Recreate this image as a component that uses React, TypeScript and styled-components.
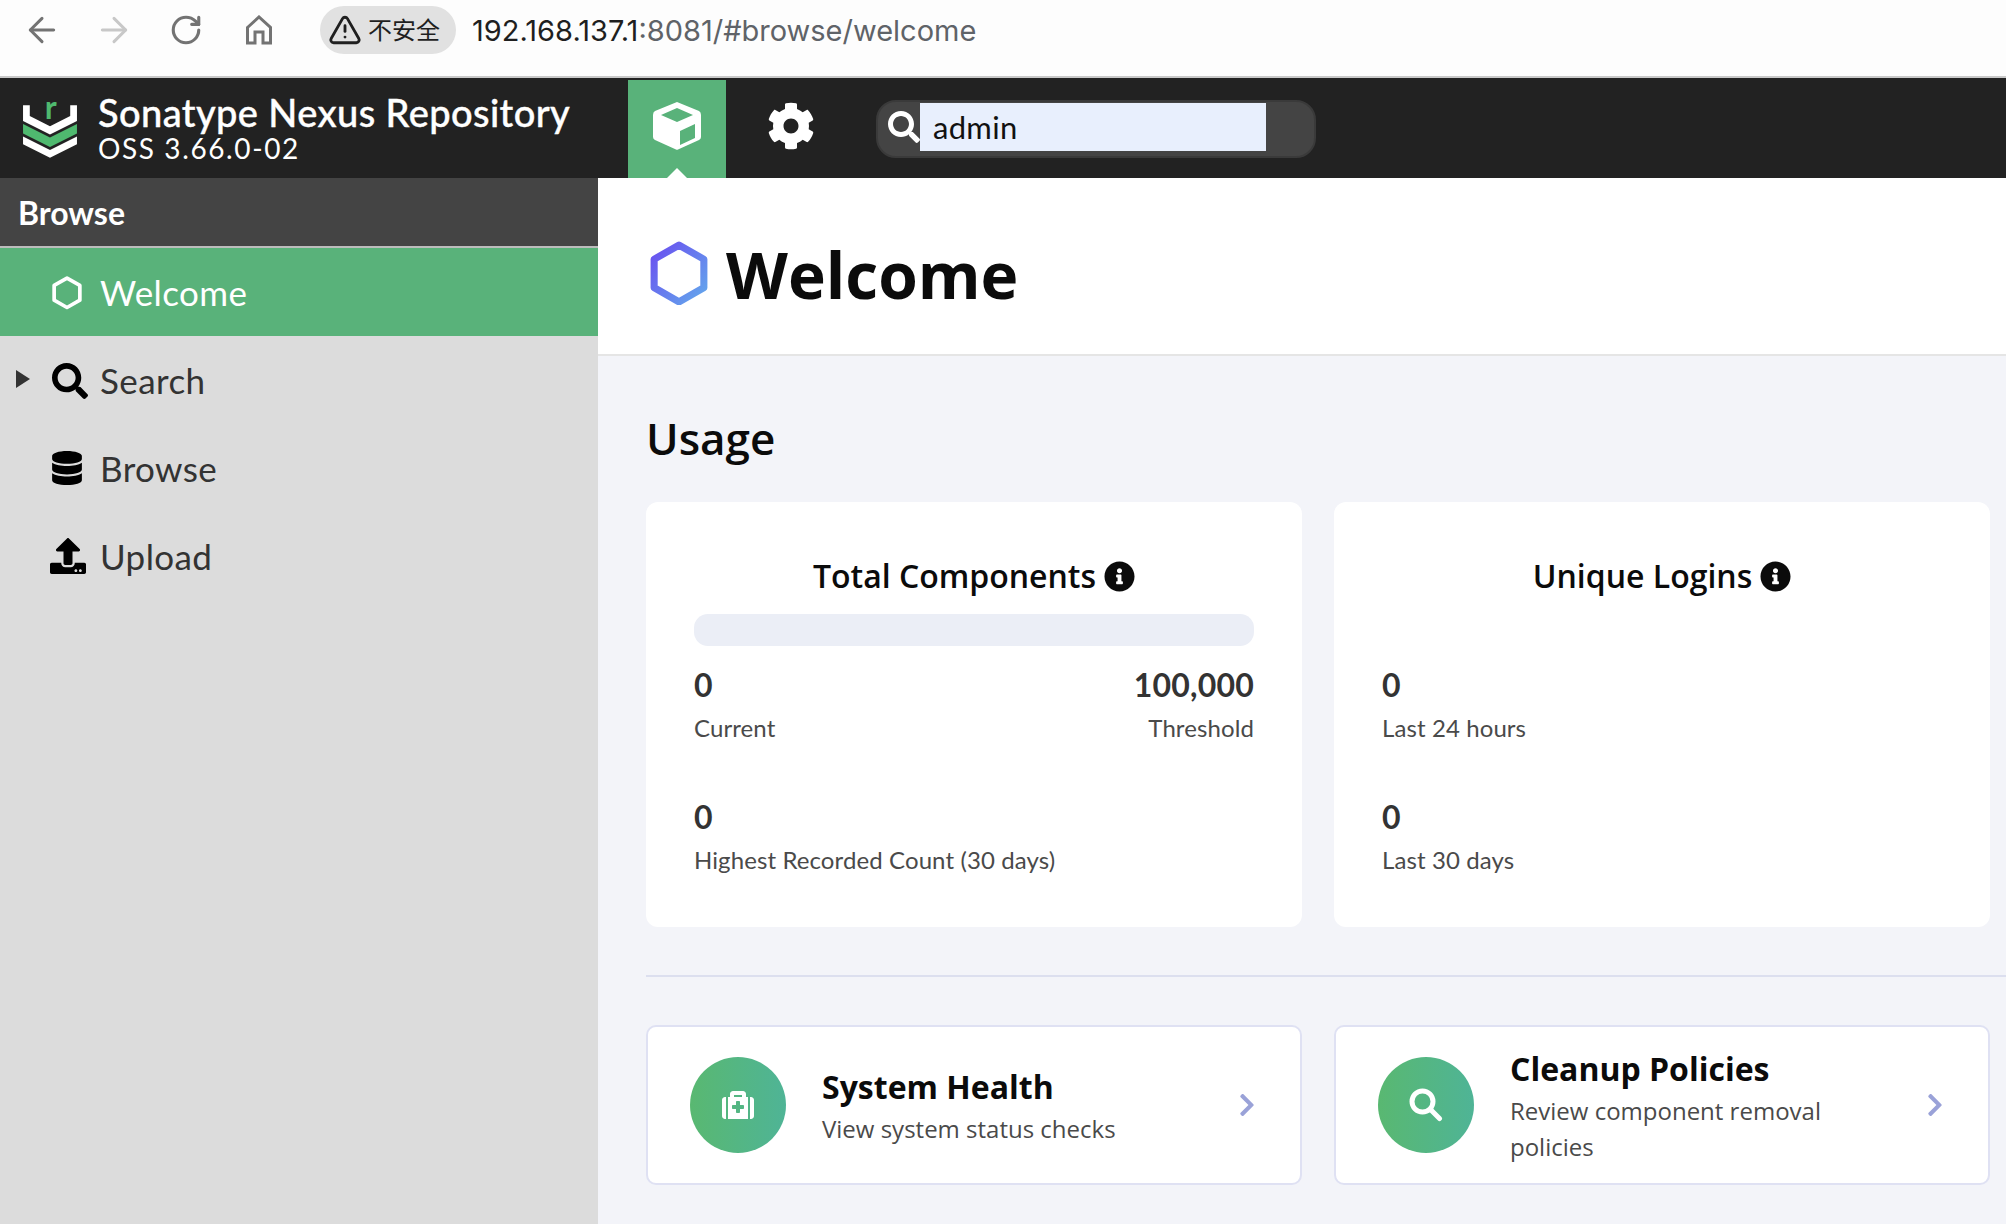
import styled, { createGlobalStyle } from "styled-components";
import { ArrowLeft, ArrowRight, RotateCw, TriangleAlert } from "lucide-react";
import { FaSearch, FaDatabase, FaCog, FaInfoCircle, FaUpload, FaMedkit, FaChevronRight } from "react-icons/fa";
import type { ReactNode } from "react";

const Global = createGlobalStyle`
  html, body { margin: 0; padding: 0; background: #f3f4f9; }
  body { font-family: "Lato", "Liberation Sans", sans-serif; }
  * { box-sizing: border-box; }
`;

const Page = styled.div`
  width: 2006px;
  height: 1224px;
  display: flex;
  flex-direction: column;
  overflow: hidden;
`;

// fake browser chrome
const BrowserBar = styled.div`
  height: 78px;
  flex: none;
  display: flex;
  align-items: center;
  padding-bottom: 16px;
  background: #fdfdfd;
  border-bottom: 2px solid #c9c9c9;
`;
const NavSlot = styled.div<{ $w: number; $dim?: boolean }>`
  width: ${(p) => p.$w}px;
  flex: none;
  display: flex;
  justify-content: center;
  color: ${(p) => (p.$dim ? "#c8c8c8" : "#737373")};
`;
const Pill = styled.div`
  flex: none;
  width: 136px;
  height: 48px;
  margin-left: 32px;
  padding-left: 8px;
  display: flex;
  align-items: center;
  gap: 6px;
  border-radius: 24px;
  background: #e1e1e1;
  color: #1f1f1f;
  font: 400 24px "Noto Sans CJK SC", sans-serif;
`;
const PillText = styled.span`
  margin-top: -4px;
`;
const Url = styled.div`
  margin-left: 16px;
  font: 400 29px "Inter", "Liberation Sans", sans-serif;
  color: #5f6368;
  b {
    font-weight: 400;
    color: #1f1f1f;
  }
`;

const TopBar = styled.header`
  height: 100px;
  flex: none;
  display: flex;
  background: #222222;
`;
const Brand = styled.div`
  width: 628px;
  flex: none;
  display: flex;
  align-items: center;
  padding-left: 23px;
  color: #fff;
`;
const BrandText = styled.div`
  margin-left: 21px;
  margin-bottom: 3px;
`;
const BrandName = styled.div`
  font-size: 38px;
  font-weight: 500;
  line-height: 42px;
  letter-spacing: 0.4px;
  -webkit-text-stroke: 0.4px #fff;
`;
const BrandVersion = styled.div`
  font-size: 28px;
  line-height: 30px;
  letter-spacing: 1.6px;
  font-weight: 400;
`;
const Tab = styled.div<{ $active?: boolean }>`
  position: relative;
  width: 98px;
  margin-top: 2px;
  flex: none;
  display: flex;
  align-items: center;
  justify-content: center;
  padding-bottom: 6px;
  background: ${(p) => (p.$active ? "#59b27a" : "transparent")};
  color: #fff;
  &::after {
    content: ${(p) => (p.$active ? '""' : "none")};
    position: absolute;
    bottom: 0;
    left: 39px;
    border-left: 10px solid transparent;
    border-right: 10px solid transparent;
    border-bottom: 10px solid #fff;
  }
`;
const GearTab = styled(Tab)`
  margin-left: 16px;
`;
const SearchBox = styled.div`
  width: 440px;
  height: 58px;
  margin: 22px 0 0 36px;
  padding: 1px 48px 5px 10px;
  flex: none;
  display: flex;
  align-items: center;
  background: #444444;
  border: 2px solid #3a3a3a;
  border-radius: 20px;
  color: #fff;
`;
const SearchIcon = styled.div`
  width: 32px;
  flex: none;
  display: flex;
`;
const SearchValue = styled.div`
  flex: 1;
  height: 48px;
  padding-left: 13px;
  font-size: 31px;
  line-height: 48px;
  letter-spacing: 0.3px;
  color: #111;
  background: #e8effd;
`;

const Body = styled.div`
  flex: 1;
  display: flex;
  min-height: 0;
`;
const Sidebar = styled.aside`
  width: 598px;
  flex: none;
  background: #dcdcdc;
`;
const SideTitle = styled.div`
  height: 70px;
  padding-left: 18px;
  display: flex;
  align-items: center;
  font-size: 32px;
  font-weight: 700;
  color: #fff;
  background: #444444;
  border-bottom: 2px solid #bcbcbc;
`;
const SideRow = styled.div<{ $active?: boolean }>`
  position: relative;
  height: 88px;
  display: flex;
  align-items: center;
  padding-left: 50px;
  font-size: 35px;
  letter-spacing: 0.4px;
  color: ${(p) => (p.$active ? "#fff" : "#333333")};
  background: ${(p) => (p.$active ? "#59b27a" : "transparent")};
`;
const SideIcon = styled.div<{ $nudge?: number }>`
  width: 50px;
  flex: none;
  display: flex;
  padding-left: ${(p) => p.$nudge ?? 0}px;
  padding-top: ${(p) => (p.$nudge ? p.$nudge : 0)}px;
  color: #000;
`;
const Caret = styled.span`
  position: absolute;
  left: 16px;
  top: 34px;
  border-top: 9px solid transparent;
  border-bottom: 9px solid transparent;
  border-left: 14px solid #333;
`;

const Main = styled.main`
  flex: 1;
  min-width: 0;
  background: #f3f4f9;
`;
const PageHead = styled.div`
  height: 178px;
  padding: 14px 0 0 52px;
  display: flex;
  align-items: center;
  gap: 18px;
  background: #fff;
  border-bottom: 2px solid #e5e5e5;
`;
const PageTitle = styled.h1`
  margin: 0;
  padding-top: 4px;
  font: 700 64px/90px "Open Sans", sans-serif;
  color: #0b0b0b;
`;
const Content = styled.div`
  padding: 53px 16px 0 48px;
`;
const Heading = styled.h2`
  margin: 0 0 33px;
  height: 60px;
  font: 600 44px/58px "Open Sans", sans-serif;
  color: #0b0b0b;
`;
const Grid = styled.div`
  display: grid;
  grid-template-columns: 656px 656px;
  gap: 32px;
`;
const Card = styled.section`
  height: 425px;
  padding: 51px 48px 0;
  border-radius: 12px;
  background: #fff;
`;
const CardTitle = styled.div`
  height: 46px;
  display: flex;
  justify-content: center;
  align-items: center;
  gap: 8px;
  font: 600 32px/46px "Open Sans", sans-serif;
  color: #0b0b0b;
`;
const Meter = styled.div<{ $empty?: boolean }>`
  height: 32px;
  margin: 15px 0 16px;
  border-radius: 14px;
  background: ${(p) => (p.$empty ? "transparent" : "#ebeef6")};
`;
const StatRow = styled.div`
  height: 132px;
  display: flex;
  justify-content: space-between;
`;
const Stat = styled.div<{ $right?: boolean }>`
  text-align: ${(p) => (p.$right ? "right" : "left")};
`;
const StatValue = styled.div`
  font-size: 32px;
  font-weight: 700;
  line-height: 46px;
  letter-spacing: 0.2px;
  color: #333;
`;
const StatLabel = styled.div`
  font-size: 24px;
  line-height: 40px;
  letter-spacing: 0.1px;
  color: #4a4a4a;
`;
const Divider = styled.hr`
  height: 2px;
  margin: 48px -16px 48px 0;
  border: 0;
  background: #dcdfef;
`;
const Action = styled.div`
  height: 160px;
  padding: 0 40px 0 42px;
  display: flex;
  align-items: center;
  border: 2px solid #dfe1f3;
  border-radius: 10px;
  background: #fff;
`;
const Circle = styled.div`
  width: 96px;
  height: 96px;
  flex: none;
  display: flex;
  align-items: center;
  justify-content: center;
  border-radius: 50%;
  color: #fff;
  background: linear-gradient(90deg, #59b871, #4fb496);
`;
const ActionText = styled.div`
  flex: 1;
  margin-left: 36px;
  padding-top: 2px;
`;
const ActionTitle = styled.div`
  font: 700 32px/44px "Open Sans", sans-serif;
  color: #0b0b0b;
`;
const ActionDesc = styled.div`
  max-width: 340px;
  margin-top: 2px;
  font: 400 24px/36px "Open Sans", sans-serif;
  color: #4a4a4a;
`;
const Chevron = styled.div`
  flex: none;
  display: flex;
  color: #9aa2d8;
`;

function Logo() {
  return (
    <svg width="54" height="91" viewBox="70 44 160 270" style={{ flex: "none" }}>
      <polygon fill="#fff" points="70,110 90,110 90,142 150,172 210,142 210,110 230,110 230,157 150,197 70,157" />
      <polygon fill="#4fb96f" points="70,166 150,206 230,166 230,194 150,234 70,194" />
      <polygon fill="#fff" points="70,203 150,243 230,203 230,226 150,266 70,226" />
      <text x="152" y="150" textAnchor="middle" fontFamily="Lato" fontWeight="700" fontSize="95" fill="#4fb96f">
        r
      </text>
    </svg>
  );
}

function CubeIcon() {
  return (
    <svg width="48" height="48" viewBox="0 0 48 48">
      <path
        fill="#fff"
        fillRule="evenodd"
        d="M24 0 46 9 Q48 10 48 13 V35 Q48 37 46 38 L25 47.500 Q24 48 23 47.500 L2 38 Q0 37 0 35 V13 Q0 10 2 9 Z M24 6 8 13 24 20 40 13 Z M27 29 V43 L42 36 V22 Z"
      />
    </svg>
  );
}

function HomeIcon() {
  return (
    <svg width="26" height="30" viewBox="0 0 26 30" fill="none" stroke="currentColor" strokeWidth="3">
      <path d="M1.500 12.500 13 2 24.500 12.500 V28 H17 V17 H9 V28 H1.500 Z" />
    </svg>
  );
}

function LensIcon() {
  return (
    <svg width="34" height="34" viewBox="0 0 34 34" fill="none" stroke="currentColor" strokeWidth="5">
      <circle cx="13.500" cy="13.500" r="10.500" />
      <path d="M21.500 21.500 30.500 30.500" strokeLinecap="round" />
    </svg>
  );
}

function Hexagon({ size, stroke }: { size: number; stroke: string }) {
  return (
    <svg width={size} height={size * 1.12} viewBox="0 0 57 64" style={{ flex: "none" }}>
      <defs>
        <linearGradient id="hexGrad" x1="0" y1="0" x2="1" y2="1">
          <stop offset="0" stopColor="#6a4ff0" />
          <stop offset="1" stopColor="#63a8ec" />
        </linearGradient>
      </defs>
      <polygon
        points="28.500,4 53,18 53,46 28.500,60 4,46 4,18"
        fill="none"
        stroke={stroke}
        strokeWidth="7"
        strokeLinejoin="round"
      />
    </svg>
  );
}

function InfoDot() {
  return <FaInfoCircle size={31} color="#0b0b0b" />;
}

function ActionCard({ icon, title, desc }: { icon: ReactNode; title: string; desc: string }) {
  return (
    <Action>
      <Circle>{icon}</Circle>
      <ActionText>
        <ActionTitle>{title}</ActionTitle>
        <ActionDesc>{desc}</ActionDesc>
      </ActionText>
      <Chevron>
        <FaChevronRight size={26} />
      </Chevron>
    </Action>
  );
}

export default function App() {
  return (
    <Page>
      <Global />
      <BrowserBar>
        <NavSlot $w={84}><ArrowLeft size={40} strokeWidth={1.8} /></NavSlot>
        <NavSlot $w={59} $dim><ArrowRight size={40} strokeWidth={1.8} /></NavSlot>
        <NavSlot $w={86}><RotateCw size={34} strokeWidth={2.2} /></NavSlot>
        <NavSlot $w={59}><HomeIcon /></NavSlot>
        <Pill>
          <TriangleAlert size={34} strokeWidth={2} />
          <PillText>不安全</PillText>
        </Pill>
        <Url>
          <b>192.168.137.1</b>:8081/#browse/welcome
        </Url>
      </BrowserBar>

      <TopBar>
        <Brand>
          <Logo />
          <BrandText>
            <BrandName>Sonatype Nexus Repository</BrandName>
            <BrandVersion>OSS 3.66.0-02</BrandVersion>
          </BrandText>
        </Brand>
        <Tab $active>
          <CubeIcon />
        </Tab>
        <GearTab>
          <FaCog size={48} />
        </GearTab>
        <SearchBox>
          <SearchIcon>
            <FaSearch size={32} />
          </SearchIcon>
          <SearchValue>admin</SearchValue>
        </SearchBox>
      </TopBar>

      <Body>
        <Sidebar>
          <SideTitle>Browse</SideTitle>
          <SideRow $active>
            <SideIcon $nudge={2}>
              <Hexagon size={30} stroke="#fff" />
            </SideIcon>
            Welcome
          </SideRow>
          <SideRow>
            <Caret />
            <SideIcon $nudge={2}>
              <FaSearch size={36} />
            </SideIcon>
            Search
          </SideRow>
          <SideRow>
            <SideIcon>
              <FaDatabase size={34} />
            </SideIcon>
            Browse
          </SideRow>
          <SideRow>
            <SideIcon>
              <FaUpload size={36} />
            </SideIcon>
            Upload
          </SideRow>
        </Sidebar>

        <Main>
          <PageHead>
            <Hexagon size={58} stroke="url(#hexGrad)" />
            <PageTitle>Welcome</PageTitle>
          </PageHead>
          <Content>
            <Heading>Usage</Heading>
            <Grid>
              <Card>
                <CardTitle>
                  Total Components <InfoDot />
                </CardTitle>
                <Meter />
                <StatRow>
                  <Stat>
                    <StatValue>0</StatValue>
                    <StatLabel>Current</StatLabel>
                  </Stat>
                  <Stat $right>
                    <StatValue>100,000</StatValue>
                    <StatLabel>Threshold</StatLabel>
                  </Stat>
                </StatRow>
                <StatRow>
                  <Stat>
                    <StatValue>0</StatValue>
                    <StatLabel>Highest Recorded Count (30 days)</StatLabel>
                  </Stat>
                </StatRow>
              </Card>
              <Card>
                <CardTitle>
                  Unique Logins <InfoDot />
                </CardTitle>
                <Meter $empty />
                <StatRow>
                  <Stat>
                    <StatValue>0</StatValue>
                    <StatLabel>Last 24 hours</StatLabel>
                  </Stat>
                </StatRow>
                <StatRow>
                  <Stat>
                    <StatValue>0</StatValue>
                    <StatLabel>Last 30 days</StatLabel>
                  </Stat>
                </StatRow>
              </Card>
            </Grid>
            <Divider />
            <Grid>
              <ActionCard
                icon={<FaMedkit size={32} />}
                title="System Health"
                desc="View system status checks"
              />
              <ActionCard
                icon={<LensIcon />}
                title="Cleanup Policies"
                desc="Review component removal policies"
              />
            </Grid>
          </Content>
        </Main>
      </Body>
    </Page>
  );
}
